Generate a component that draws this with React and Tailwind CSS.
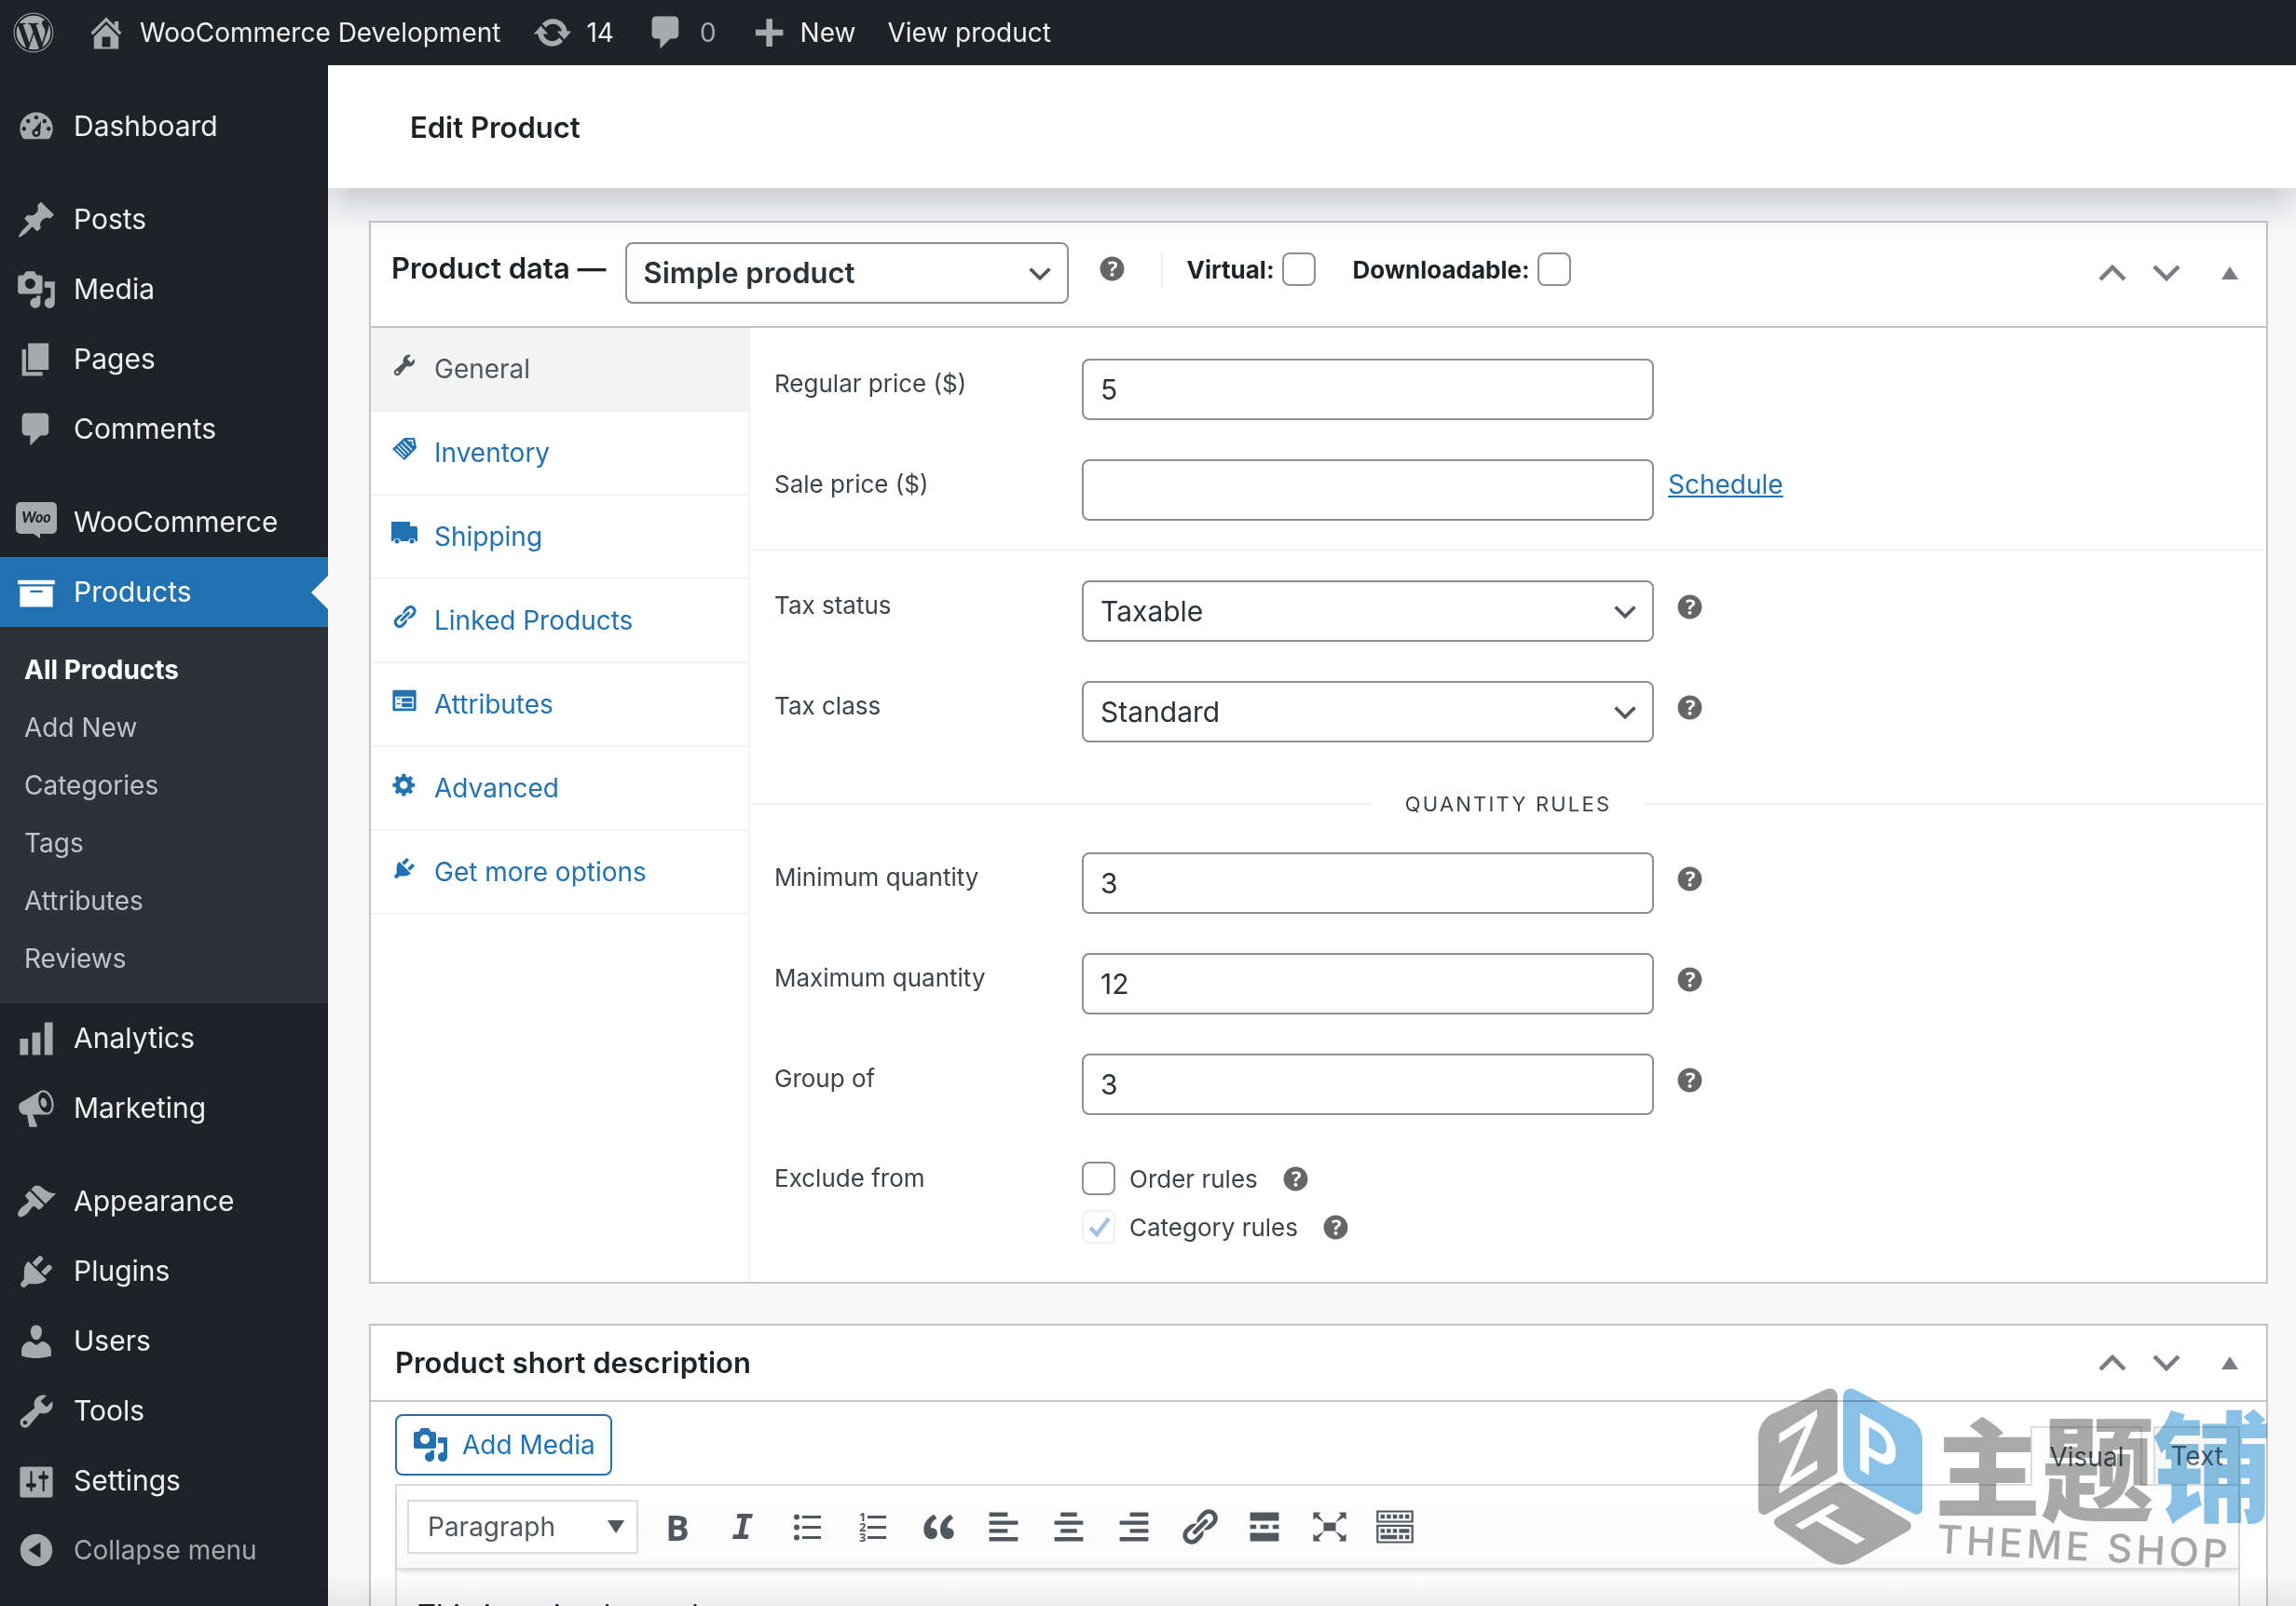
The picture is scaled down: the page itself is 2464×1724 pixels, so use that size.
import React, { useState } from "react";
import { FaWordpress } from "react-icons/fa";

const ICONS = {
  home: "M16 8.5l1.53 1.53-1.06 1.06L10 4.6l-6.47 6.5-1.06-1.07L10 2.5l4 4v-2h2v4zm-6-2.46l6 5.99V18H4v-5.97zM12 17v-5H8v5h4z",
  update:
    "M10.2 3.28c3.53 0 6.43 2.61 6.92 6h2.08l-3.5 4-3.5-4h2.32c-.45-1.97-2.21-3.45-4.32-3.45-1.45 0-2.73.71-3.54 1.78L4.95 5.66C6.23 4.2 8.11 3.28 10.2 3.28zm-.4 13.44c-3.52 0-6.43-2.61-6.92-6H.8l3.5-4c1.17 1.33 2.33 2.67 3.5 4H5.48c.45 1.97 2.21 3.45 4.32 3.45 1.45 0 2.73-.71 3.54-1.78l1.71 1.95c-1.28 1.46-3.15 2.38-5.25 2.38z",
  plus: "M17 8.5v3h-5.2v5.3h-3v-5.3H3.6v-3h5.2V3.3h3v5.2z",
  comments:
    "M5 2h9c1.1 0 2 .9 2 2v7c0 1.1-.9 2-2 2h-2l-5 5v-5H5c-1.1 0-2-.9-2-2V4c0-1.1.9-2 2-2z",
  posts:
    "M10.44 3.02l1.82-1.82 6.36 6.35-1.83 1.82c-1.05-.68-2.48-.57-3.41.36l-.75.75c-.92.93-1.04 2.35-.35 3.41l-1.83 1.82-2.41-2.41-2.8 2.79c-.42.42-3.38 2.71-3.8 2.29s1.86-3.39 2.28-3.81l2.79-2.79L4.1 9.36l1.83-1.82c1.05.69 2.48.57 3.4-.36l.75-.75c.93-.92 1.05-2.35.36-3.41z",
  media:
    "M13 11V4c0-.55-.45-1-1-1h-1.67L9 1H5L3.67 3H2c-.55 0-1 .45-1 1v7c0 .55.45 1 1 1h10c.55 0 1-.45 1-1zM7 4.5c1.38 0 2.5 1.12 2.5 2.5S8.38 9.5 7 9.5 4.5 8.38 4.5 7 5.62 4.5 7 4.5zM14 6h5v10.5c0 1.38-1.12 2.5-2.5 2.5S14 17.88 14 16.5s1.12-2.5 2.5-2.5c.17 0 .34.02.5.05V9h-3V6zm-4 8.05V13h2v3.5c0 1.38-1.12 2.5-2.5 2.5S7 17.88 7 16.5 8.12 14 9.5 14c.17 0 .34.02.5.05z",
  pages: "M6 15V2h10v13H6zm-1 1h8v2H3V5h2v11z",
  products: "M19 4v2H1V4h18zM2 7h16v10H2V7zm11 3V9H7v1h6z",
  analytics: "M18 18V2h-4v16h4zm-6 0V7H8v11h4zm-6 0v-8H2v8h4z",
  marketing:
    "M18.15 5.94c.46 1.62.38 3.22-.02 4.48-.42 1.28-1.26 2.18-2.3 2.48-.16.06-.26.06-.4.06-.06.02-.12.02-.18.02-.06.02-.14.02-.22.02h-6.8l2.22 5.5c.02.14-.06.26-.14.34-.08.1-.24.16-.34.16H6.95c-.1 0-.26-.06-.34-.16-.08-.08-.16-.2-.14-.34l-1-5.5H4.25l-.02-.02c-.5.06-1.08-.18-1.54-.62s-.88-1.08-1.06-1.88c-.24-.8-.2-1.56-.02-2.2.18-.62.58-1.08 1.06-1.3l.02-.02 9-5.4c.1-.06.18-.1.24-.16.06-.04.14-.08.24-.12.16-.08.28-.12.5-.18 1.04-.3 2.24.1 3.22.98s1.84 2.24 2.26 3.86zm-2.58 5.98h-.02c.4-.1.74-.34 1.04-.7.58-.7.86-1.76.86-3.04 0-.64-.1-1.3-.28-1.98-.34-1.36-1.02-2.5-1.78-3.24s-1.68-1.1-2.46-.88c-.82.22-1.4.96-1.7 2-.32 1.04-.28 2.36.06 3.72.38 1.36 1 2.5 1.8 3.24.78.74 1.62 1.1 2.48.88zm-2.54-7.08c.22-.04.42-.02.62.04.38.16.76.48 1.02 1s.42 1.2.42 1.78c0 .3-.04.56-.12.8-.18.48-.44.84-.86.94-.34.1-.8-.06-1.14-.4s-.64-.86-.78-1.5c-.18-.62-.12-1.24.02-1.72s.48-.84.82-.94z",
  appearance:
    "M14.48 11.06L7.41 3.99l1.5-1.5c.5-.56 2.3-.47 3.51.32 1.21.8 1.43 1.28 2.91 2.1 1.18.64 2.45 1.26 4.45.85zm-.71.71L6.7 4.7 4.93 6.47c-.39.39-.39 1.02 0 1.41l1.06 1.06c.39.39.39 1.03 0 1.42-.6.6-1.43 1.11-2.21 1.69-.35.26-.7.53-1.01.84C1.43 14.23.4 16.08 1.4 17.07c.99 1 2.84-.03 4.18-1.36.31-.31.58-.66.85-1.02.57-.78 1.08-1.61 1.69-2.21.39-.39 1.02-.39 1.41 0l1.06 1.06c.39.39 1.02.39 1.41 0z",
  plugins:
    "M13.11 4.36L9.87 7.6 8 5.73l3.24-3.24c.35-.34 1.05-.2 1.56.32.52.51.66 1.21.31 1.55zm-8 1.77l.91-1.12 9.01 9.01-1.19.84c-.71.71-2.63 1.16-3.82 1.16H6.14L4.9 17.26c-.59.59-1.54.59-2.12 0-.59-.58-.59-1.53 0-2.12l1.24-1.24v-3.88c0-1.13.4-3.19 1.09-3.89zm7.26 3.97l3.24-3.24c.34-.35 1.04-.21 1.55.31.52.51.66 1.21.31 1.55l-3.24 3.25z",
  users:
    "M10 9.25c-2.27 0-2.73-3.44-2.73-3.44C7 4.02 7.82 2 9.97 2c2.16 0 2.98 2.02 2.71 3.81 0 0-.41 3.44-2.68 3.44zm0 2.57L12.72 10c2.39 0 4.52 2.33 4.52 4.53v2.49s-3.65 1.13-7.24 1.13c-3.65 0-7.24-1.13-7.24-1.13v-2.49c0-2.25 1.94-4.48 4.47-4.48z",
  tools:
    "M16.68 9.77c-1.34 1.34-3.3 1.67-4.95.99l-5.41 6.52c-.99.99-2.59.99-3.58 0s-.99-2.59 0-3.57l6.52-5.42c-.68-1.65-.35-3.61.99-4.95 1.28-1.28 3.12-1.62 4.72-1.06l-2.89 2.89 2.82 2.82 2.86-2.87c.53 1.58.18 3.39-1.08 4.65zM3.81 16.21c.4.39 1.04.39 1.43 0 .4-.4.4-1.04 0-1.43-.39-.4-1.03-.4-1.43 0-.39.39-.39 1.03 0 1.43z",
  settings:
    "M18 16V4c0-.55-.45-1-1-1H3c-.55 0-1 .45-1 1v13c0 .55.45 1 1 1h14c.55 0 1-.45 1-1zM8 11h1c.55 0 1 .45 1 1s-.45 1-1 1H8v1.5c0 .28-.22.5-.5.5s-.5-.22-.5-.5V13H6c-.55 0-1-.45-1-1s.45-1 1-1h1V5.5c0-.28.22-.5.5-.5s.5.22.5.5V11zm5-2h-1c-.55 0-1-.45-1-1s.45-1 1-1h1v-1.5c0-.28.22-.5.5-.5s.5.22.5.5V7h1c.55 0 1 .45 1 1s-.45 1-1 1h-1v5.5c0 .28-.22.5-.5.5s-.5-.22-.5-.5V9z",
  collapse:
    "M10 2.16c4.33 0 7.84 3.51 7.84 7.84s-3.51 7.84-7.84 7.84S2.16 14.33 2.16 10 5.67 2.16 10 2.16zm2 11.72V6.12L6.18 9.97z",
  help: "M17 10c0-3.87-3.14-7-7-7-3.87 0-7 3.13-7 7s3.13 7 7 7c3.86 0 7-3.13 7-7zm-6.3 1.48H9.14v-.43c0-.38.08-.7.24-.98s.46-.57.88-.89c.41-.29.68-.53.81-.71.14-.18.2-.39.2-.62 0-.25-.09-.44-.28-.58-.19-.13-.45-.19-.79-.19-.58 0-1.25.19-2 .57l-.64-1.28c.87-.49 1.8-.74 2.77-.74.81 0 1.45.2 1.92.58.48.39.71.91.71 1.55 0 .43-.09.8-.29 1.11-.19.32-.57.67-1.11 1.06-.38.28-.61.49-.71.63-.1.15-.15.34-.15.57v.35zm-1.47 2.74c-.18-.17-.27-.42-.27-.73 0-.33.08-.58.26-.75s.43-.25.77-.25c.32 0 .57.09.75.26s.27.42.27.74c0 .3-.09.55-.27.72-.18.18-.43.27-.75.27-.33 0-.58-.09-.76-.26z",
  link: "M17.74 2.76c1.68 1.69 1.68 4.41 0 6.1l-1.53 1.52c-1.12 1.12-2.7 1.47-4.14 1.09l2.62-2.61.76-.77.76-.76c.84-.84.84-2.2 0-3.04-.84-.85-2.2-.85-3.04 0l-.77.76-3.38 3.38c-.37-1.44-.02-3.02 1.1-4.14l1.52-1.53c1.69-1.68 4.42-1.68 6.1 0zM8.59 13.43l5.34-5.34c.42-.42.42-1.1 0-1.52-.44-.43-1.13-.39-1.53 0l-5.33 5.34c-.42.42-.42 1.1 0 1.52.44.43 1.13.39 1.52 0zm-.76 2.29l4.14-4.15c.38 1.44.03 3.02-1.09 4.14l-1.52 1.53c-1.69 1.68-4.41 1.68-6.1 0-1.68-1.68-1.68-4.42 0-6.1l1.53-1.52c1.12-1.12 2.7-1.47 4.14-1.1l-4.14 4.15c-.85.84-.85 2.2 0 3.05.84.84 2.2.84 3.04 0z",
  attributes:
    "M2 2h16c.55 0 1 .45 1 1v14c0 .55-.45 1-1 1H2c-.55 0-1-.45-1-1V3c0-.55.45-1 1-1zm15 14V7H3v9h14zM4 8v1h3V8H4zm4 0v3h8V8H8zm-4 4v1h3v-1H4zm4 0v3h8v-3H8z",
  gear: "M18 12h-2.18c-.17.7-.44 1.35-.81 1.93l1.54 1.54-2.1 2.1-1.54-1.54c-.58.36-1.23.63-1.91.79V19H8v-2.18c-.68-.16-1.33-.43-1.91-.79l-1.54 1.54-2.12-2.12 1.54-1.54c-.36-.58-.63-1.23-.79-1.91H1V9.03h2.17c.16-.7.44-1.35.8-1.94L2.43 5.55l2.1-2.1 1.54 1.54c.58-.37 1.24-.64 1.93-.81V2h3v2.18c.68.16 1.33.43 1.91.79l1.54-1.54 2.12 2.12-1.54 1.54c.36.59.64 1.24.8 1.94H18V12zm-8.5 1.5c1.66 0 3-1.34 3-3s-1.34-3-3-3-3 1.34-3 3 1.34 3 3 3z",
  quote:
    "M9.49 13.22c0-.74-.2-1.38-.61-1.9-.62-.78-1.83-.88-2.53-.72-.29-1.65 1.11-3.75 2.92-4.65L7.88 4c-2.73 1.3-5.42 4.28-4.96 8.05C3.21 14.43 4.59 16 6.54 16c.85 0 1.56-.25 2.12-.75s.83-1.18.83-2.03zm8.05 0c0-.74-.2-1.38-.61-1.9-.63-.78-1.83-.88-2.53-.72-.29-1.65 1.11-3.75 2.92-4.65L15.93 4c-2.73 1.3-5.41 4.28-4.95 8.05.29 2.38 1.66 3.95 3.61 3.95.85 0 1.56-.25 2.12-.75s.83-1.18.83-2.03z",
  alignLeft: "M12 5V3H3v2h9zm5 4V7H3v2h14zm-5 4v-2H3v2h9zm5 4v-2H3v2h14z",
  alignCenter: "M14 5V3H6v2h8zm3 4V7H3v2h14zm-3 4v-2H6v2h8zm3 4v-2H3v2h14z",
  alignRight: "M17 5V3H8v2h9zm0 4V7H3v2h14zm0 4v-2H8v2h9zm0 4v-2H3v2h14z",
  more: "M17 7V3H3v4h14zM6 11V9H3v2h3zm6 0V9H8v2h4zm5 0V9h-3v2h3zm0 6v-4H3v4h14z",
  fullscreen:
    "M7 8h6v4H7zM2 3h3.600L4.500 4.200 7.300 8 3.300 5.400 2 6.600zM18 3h-3.600l1.100 1.200L12.700 8l4-2.600L18 6.600zM2 17h3.600l-1.100-1.200L7.300 12l-4 2.600L2 13.400zM18 17h-3.600l1.100-1.200L12.700 12l4 2.600 1.300-1.200z",
  kitchen:
    "M19 2v6H1V2h18zm-1 5V3H2v4h16zM5 4v2H3V4h2zm3 0v2H6V4h2zm3 0v2H9V4h2zm3 0v2h-2V4h2zm3 0v2h-2V4h2zm2 5v9H1V9h18zm-1 8v-7H2v7h16zM5 11v2H3v-2h2zm3 0v2H6v-2h2zm3 0v2H9v-2h2zm6 0v2h-5v-2h5zm-6 3v2H3v-2h8zm3 0v2h-2v-2h2zm3 0v2h-2v-2h2z",
};

function Icon({ name, className }) {
  return (
    <svg viewBox="0 0 20 20" fill="currentColor" fillRule="evenodd" className={className} aria-hidden="true">
      <path d={ICONS[name]} />
    </svg>
  );
}

function DashboardIcon() {
  return (
    <svg viewBox="0 1 20 20" className="size-11 shrink-0" aria-hidden="true">
      <path fill="currentColor" d="M3.8 17h12.400A8 8 0 1 0 3.800 17z" />
      <g fill="#1d2327">
        <circle cx="10" cy="6.500" r="1" />
        <circle cx="6" cy="8.300" r="1" />
        <circle cx="14" cy="8.300" r="1" />
        <circle cx="4" cy="12" r="1" />
        <circle cx="16" cy="12" r="1" />
        <path d="M12.300 8.300l-.4 5.400a2 2 0 1 1-2.800-1.600z" />
      </g>
      <circle cx="10" cy="14" r=".9" fill="currentColor" />
    </svg>
  );
}

function WooIcon() {
  return (
    <svg viewBox="0 0 44 44" className="size-11 shrink-0" aria-hidden="true">
      <path
        fill="currentColor"
        d="M5 0h34a5 5 0 0 1 5 5v24a5 5 0 0 1-5 5H26v5l-7-5H5a5 5 0 0 1-5-5V5a5 5 0 0 1 5-5z"
      />
      <text x="22" y="22" textAnchor="middle" fontSize="16" fontWeight="900" fontStyle="italic" fill="#1d2327" fontFamily="Lato, sans-serif">
        Woo
      </text>
    </svg>
  );
}

function InventoryIcon() {
  return (
    <svg viewBox="0 0 28 28" className="size-7 shrink-0" aria-hidden="true">
      <path d="M1 14 14 2l11 0 2 11-13 13z" fill="currentColor" />
      <path d="M17 4h6l1 7z" fill="#fff" />
      <circle cx="21" cy="7" r="1.600" fill="currentColor" />
      <path d="M13 6l9 9M10 9l9 9M7 11l9 9M5 14l9 9" stroke="#fff" strokeWidth="1.200" />
    </svg>
  );
}

function ShippingIcon() {
  return (
    <svg viewBox="0 0 28 28" className="size-7 shrink-0" aria-hidden="true">
      <path d="M0 2h20v5h7l1 2v14H0z" fill="currentColor" />
      <path d="M2 24a4 4 0 0 1 8 0M18 24a4 4 0 0 1 8 0" fill="#fff" />
      <circle cx="6" cy="23" r="2.500" fill="currentColor" />
      <circle cx="22" cy="23" r="2.500" fill="currentColor" />
    </svg>
  );
}

function ListIcon({ numbered }) {
  return (
    <svg viewBox="0 0 44 44" className="size-11" fill="currentColor" aria-hidden="true">
      <path d="M16 10h20v3H16zM16 21h20v3H16zM16 32h20v3H16z" />
      {numbered ? (
        <g fontSize="13" fontWeight="700" fontFamily="Open Sans, sans-serif">
          <text x="7" y="16">1</text>
          <text x="7" y="27">2</text>
          <text x="7" y="38">3</text>
        </g>
      ) : (
        <g>
          <circle cx="10" cy="11.500" r="3" />
          <circle cx="10" cy="22.500" r="3" />
          <circle cx="10" cy="33.500" r="3" />
        </g>
      )}
    </svg>
  );
}

function Chevron({ up, className }) {
  return (
    <svg viewBox="0 0 32 20" fill="none" stroke="currentColor" className={className} aria-hidden="true">
      <path d={up ? "M3 17 16 4l13 13" : "M3 3l13 13L29 3"} strokeWidth="4.500" />
    </svg>
  );
}

const MENU = [
  [{ label: "Dashboard", icon: "dashboard" }],
  [
    { label: "Posts", icon: "posts" },
    { label: "Media", icon: "media" },
    { label: "Pages", icon: "pages" },
    { label: "Comments", icon: "comments" },
  ],
  [
    { label: "WooCommerce", icon: "woo" },
    { label: "Products", icon: "products", active: true },
    { label: "Analytics", icon: "analytics" },
    { label: "Marketing", icon: "marketing" },
  ],
  [
    { label: "Appearance", icon: "appearance" },
    { label: "Plugins", icon: "plugins" },
    { label: "Users", icon: "users" },
    { label: "Tools", icon: "tools" },
    { label: "Settings", icon: "settings" },
  ],
];

const SUBMENU = ["All Products", "Add New", "Categories", "Tags", "Attributes", "Reviews"];

const TABS = [
  { label: "General", icon: "tools" },
  { label: "Inventory", icon: "inventory" },
  { label: "Shipping", icon: "shipping" },
  { label: "Linked Products", icon: "link" },
  { label: "Attributes", icon: "attributes" },
  { label: "Advanced", icon: "gear" },
  { label: "Get more options", icon: "plugins" },
];

function AdminBar() {
  return (
    <header className="flex h-[70px] shrink-0 items-center gap-[34px] bg-[#1d2327] pl-3.5 text-[28px] text-[#f0f0f1]">
      <a href="#wp" aria-label="About WordPress" className="text-[#a7aaad]">
        <FaWordpress className="size-11" />
      </a>
      <a href="#site" className="flex items-center gap-3.5">
        <Icon name="home" className="size-11 text-[#a7aaad]" />
        WooCommerce Development
      </a>
      <a href="#updates" className="flex items-center gap-3.5">
        <Icon name="update" className="size-11 text-[#a7aaad]" />
        14
      </a>
      <a href="#comments" className="flex items-center gap-3.5 text-[#a7aaad]">
        <Icon name="comments" className="size-11" />0
      </a>
      <a href="#new" className="flex items-center gap-3">
        <Icon name="plus" className="size-11 text-[#a7aaad]" />
        New
      </a>
      <a href="#view">View product</a>
    </header>
  );
}

function MenuIcon({ icon }) {
  if (icon === "dashboard") return <DashboardIcon />;
  if (icon === "woo") return <WooIcon />;
  return <Icon name={icon} className="size-11 shrink-0" />;
}

function Sidebar() {
  return (
    <nav className="w-[352px] shrink-0 bg-[#1d2327] pt-7 text-[30px] text-[#f0f0f1]">
      <ul className="flex flex-col gap-[25px]">
        {MENU.map((group, index) => (
          <li key={index}>
            <ul>
              {group.map((item) => (
                <li key={item.label}>
                  <a
                    href={`#${item.label}`}
                    className={`relative flex h-[75px] items-center gap-[18px] pl-[17px] ${
                      item.active ? "bg-[#2271b1] text-white" : ""
                    }`}
                  >
                    <span className={item.active ? "text-white" : "text-[#a7aaad]"}>
                      <MenuIcon icon={item.icon} />
                    </span>
                    {item.label}
                    {item.active && (
                      <span className="absolute top-1/2 right-0 -translate-y-1/2 border-y-[18px] border-r-[18px] border-y-transparent border-r-[#f8f8f9]" />
                    )}
                  </a>
                  {item.active && (
                    <ul className="bg-[#2c3338] pt-[15px] pb-[17px] text-[28px] text-[#c3c4c7]">
                      {SUBMENU.map((label, i) => (
                        <li key={label}>
                          <a
                            href={`#${label}`}
                            className={`block pl-[26px] leading-[62px] ${i === 0 ? "font-bold text-white" : ""}`}
                          >
                            {label}
                          </a>
                        </li>
                      ))}
                    </ul>
                  )}
                </li>
              ))}
            </ul>
          </li>
        ))}
      </ul>
      <button className="flex h-[73px] w-full items-center gap-[18px] pl-[17px] text-[28px] text-[#a7aaad]">
        <Icon name="collapse" className="size-11" />
        Collapse menu
      </button>
    </nav>
  );
}

function Help({ label }) {
  return (
    <button aria-label={`Help: ${label}`} className="flex h-14 items-center text-[#666]">
      <Icon name="help" className="size-[37px]" />
    </button>
  );
}

function PanelHandles() {
  return (
    <div className="flex h-[66px] items-center text-[#787c82]">
      <button aria-label="Move up" className="px-[13px]">
        <Chevron up className="h-5 w-8" />
      </button>
      <button aria-label="Move down" className="px-[13px]">
        <Chevron className="h-5 w-8" />
      </button>
      <button aria-label="Toggle panel" className="px-[30px]">
        <svg viewBox="0 0 18 14" fill="currentColor" className="h-3.5 w-[18px]" aria-hidden="true">
          <path d="M9 0l9 14H0z" />
        </svg>
      </button>
    </div>
  );
}

function SelectBox({ id, options, className, label }) {
  return (
    <div className={`relative ${className}`}>
      <select
        id={id}
        aria-label={label}
        className="h-[66px] w-full appearance-none rounded-lg border-2 border-[#8c8f94] bg-white pl-[18px] text-[#2c3338]"
      >
        {options.map((option) => (
          <option key={option}>{option}</option>
        ))}
      </select>
      <Chevron className="pointer-events-none absolute top-[26px] right-[18px] h-4 w-[26px] text-[#50575e]" />
    </div>
  );
}

function Field({ id, label, children }) {
  return (
    <div className="flex items-start pl-[26px]">
      <label htmlFor={id} className="w-[330px] shrink-0 text-[26px] leading-[54px] text-[#3c434a]">
        {label}
      </label>
      {children}
    </div>
  );
}

function TextField({ id, label, value, children }) {
  const [text, setText] = useState(value);
  return (
    <Field id={id} label={label}>
      <input
        id={id}
        type="text"
        value={text}
        onChange={(e) => setText(e.target.value)}
        className="h-[66px] w-[614px] rounded-lg border-2 border-[#8c8f94] bg-white px-[18px] text-[30px] text-[#2c3338]"
      />
      {children}
    </Field>
  );
}

function Tick({ id, checked, disabled }) {
  return (
    <span className="relative inline-flex shrink-0">
      <input
        id={id}
        type="checkbox"
        defaultChecked={checked}
        disabled={disabled}
        className="size-9 appearance-none rounded-lg border-2 border-[#8c8f94] bg-white disabled:border-[#f0f0f1]"
      />
      {checked && (
        <svg viewBox="0 0 36 36" className="pointer-events-none absolute inset-0" fill="none" stroke="#a9c0e0" aria-hidden="true">
          <path d="M9 19l7 7L29 9" strokeWidth="4.500" />
        </svg>
      )}
    </span>
  );
}

function TabIcon({ icon }) {
  if (icon === "inventory") return <InventoryIcon />;
  if (icon === "shipping") return <ShippingIcon />;
  return <Icon name={icon} className="size-7 shrink-0" />;
}

function ProductData() {
  const [tab, setTab] = useState("General");

  return (
    <section className="border-2 border-[#c3c4c7] bg-white">
      <div className="flex items-start border-b-2 border-[#c3c4c7] pt-[21px] pb-6 pl-[22px]">
        <h2 className="mr-5 text-[31px] leading-14 font-semibold text-[#1d2327]">Product data —</h2>
        <SelectBox
          label="Product type"
          options={["Simple product", "Grouped product", "Variable product"]}
          className="w-[476px] text-[31px] font-semibold"
        />
        <div className="ml-7">
          <Help label="Product type" />
        </div>
        <div className="mt-3 ml-[34px] h-9 w-0.5 bg-[#eee]" />
        <div className="ml-[26px] flex h-[58px] items-center gap-10 text-[26px] font-bold text-[#1d2327]">
          <span className="flex items-center gap-2">
            <label htmlFor="virtual">Virtual:</label>
            <Tick id="virtual" />
          </span>
          <span className="flex items-center gap-2">
            <label htmlFor="downloadable">Downloadable:</label>
            <Tick id="downloadable" />
          </span>
        </div>
        <div className="ml-auto">
          <PanelHandles />
        </div>
      </div>

      <div className="flex">
        <div className="w-[407px] shrink-0 border-r-2 border-[#f3f3f4] text-[28px]">
          {TABS.map((item) => (
            <button
              key={item.label}
              onClick={() => setTab(item.label)}
              className={`flex h-[90px] w-full items-center gap-[18px] border-b-2 border-[#f3f3f4] pl-[22px] ${
                tab === item.label ? "bg-[#f4f4f4] text-[#50575e]" : "text-[#2271b1]"
              }`}
            >
              <span className="pb-2">
                <TabIcon icon={item.icon} />
              </span>
              {item.label}
            </button>
          ))}
        </div>

        <div className="flex-1">
          <div className="flex flex-col gap-[42px] border-b-2 border-[#f3f3f4] pt-[33px] pb-[30px]">
            <TextField id="regular_price" label="Regular price ($)" value="5" />
            <TextField id="sale_price" label="Sale price ($)" value="">
              <a href="#schedule" className="ml-[15px] text-[28px] leading-[54px] text-[#2271b1] underline">
                Schedule
              </a>
            </TextField>
          </div>

          <div className="flex flex-col gap-[42px] pt-8">
            <Field id="tax_status" label="Tax status">
              <SelectBox id="tax_status" options={["Taxable", "Shipping only", "None"]} className="mr-5 w-[614px] text-[30px]" />
              <Help label="Tax status" />
            </Field>
            <Field id="tax_class" label="Tax class">
              <SelectBox id="tax_class" options={["Standard", "Reduced rate", "Zero rate"]} className="mr-5 w-[614px] text-[30px]" />
              <Help label="Tax class" />
            </Field>
          </div>

          <div className="mt-[50px] mb-9 flex items-center gap-9">
            <div className="h-0.5 flex-1 bg-[#f3f3f4]" />
            <h3 className="text-[22px] leading-8 tracking-widest text-[#3c434a]">QUANTITY RULES</h3>
            <div className="h-0.5 flex-1 bg-[#f3f3f4]" />
          </div>

          <div className="flex flex-col gap-[42px]">
            <TextField id="min_qty" label="Minimum quantity" value="3">
              <div className="ml-5">
                <Help label="Minimum quantity" />
              </div>
            </TextField>
            <TextField id="max_qty" label="Maximum quantity" value="12">
              <div className="ml-5">
                <Help label="Maximum quantity" />
              </div>
            </TextField>
            <TextField id="group_of" label="Group of" value="3">
              <div className="ml-5">
                <Help label="Group of" />
              </div>
            </TextField>
          </div>

          <fieldset className="mt-10 flex pb-[31px] pl-[26px] text-[26px] text-[#3c434a]">
            <legend className="float-left w-[330px] leading-14">Exclude from</legend>
            <div>
              <div className="flex h-14 items-center">
                <Tick id="order_rules" />
                <label htmlFor="order_rules" className="mr-[22px] ml-[15px]">
                  Order rules
                </label>
                <Help label="Order rules" />
              </div>
              <div className="-mt-1 flex h-14 items-center">
                <Tick id="category_rules" checked disabled />
                <label htmlFor="category_rules" className="mr-[22px] ml-[15px]">
                  Category rules
                </label>
                <Help label="Category rules" />
              </div>
            </div>
          </fieldset>
        </div>
      </div>
    </section>
  );
}

const TOOLS = [
  { label: "Bold", text: "B", style: "font-['Open_Sans'] text-[38px] font-bold" },
  { label: "Italic", text: "I", style: "font-['DejaVu_Sans_Mono'] text-[38px] font-bold italic" },
  { label: "Bulleted list", list: true },
  { label: "Numbered list", list: true, numbered: true },
  { label: "Blockquote", icon: "quote" },
  { label: "Align left", icon: "alignLeft" },
  { label: "Align center", icon: "alignCenter" },
  { label: "Align right", icon: "alignRight" },
  { label: "Insert link", icon: "link" },
  { label: "Read more", icon: "more" },
  { label: "Fullscreen", icon: "fullscreen" },
  { label: "Toolbar toggle", icon: "kitchen" },
];

function ShortDescription() {
  return (
    <section className="relative mt-[43px] border-2 border-[#c3c4c7] bg-white">
      <div className="flex h-[82px] items-center justify-between border-b-2 border-[#c3c4c7] pl-[26px]">
        <h2 className="text-[31px] font-semibold text-[#1d2327]">Product short description</h2>
        <PanelHandles />
      </div>

      <div className="pr-7 pl-[26px]">
        <div className="flex items-end justify-between">
          <button className="mt-[13px] mb-[9px] flex h-[66px] items-center gap-3.5 rounded-lg border-2 border-[#2271b1] px-4 text-[28px] text-[#2271b1]">
            <Icon name="media" className="size-10" />
            Add Media
          </button>
          <div className="-mb-0.5 flex gap-3 text-[28px]">
            <button className="h-16 border-2 border-b-0 border-[#dcdcde] bg-white px-[18px] text-[#50575e]">Visual</button>
            <button className="h-16 border-2 border-[#dcdcde] bg-[#f6f7f7] px-4 text-[#646970]">Text</button>
          </div>
        </div>

        <div className="border-2 border-[#dcdcde]">
          <div className="flex h-[90px] items-center border-b-2 border-[#dcdcde] bg-gradient-to-b from-white to-[#fafafa] pl-[11px] text-[#50575e] shadow-md">
            <button className="mr-[7px] flex h-[58px] w-[248px] items-center justify-between border-2 border-[#dcdcde] bg-white pr-[13px] pl-5 text-[28px]">
              Paragraph
              <svg viewBox="0 0 18 14" fill="currentColor" className="h-3.5 w-[18px]" aria-hidden="true">
                <path d="M0 0h18l-9 14z" />
              </svg>
            </button>
            {TOOLS.map((tool) => (
              <button key={tool.label} aria-label={tool.label} className="flex w-[70px] items-center justify-center">
                {tool.text && <span className={`leading-11 ${tool.style}`}>{tool.text}</span>}
                {tool.list && <ListIcon numbered={tool.numbered} />}
                {tool.icon && <Icon name={tool.icon} className="size-11" />}
              </button>
            ))}
          </div>
          <p className="h-60 px-[22px] pt-[26px] text-[31px] text-[#1d2327]">This is a simple product.</p>
        </div>
      </div>

      <ThemeShopLogo />
    </section>
  );
}

function ThemeShopLogo() {
  return (
    <svg viewBox="0 0 560 216" className="pointer-events-none absolute top-[60px] -right-1.5 h-[216px] w-[560px] mix-blend-multiply">
      <g fill="#a9a9a9" stroke="#a9a9a9" strokeWidth="12" strokeLinejoin="round">
        <path d="M84 14c3-1 4 0 4 3v78l-73 42V60c0-8 3-14 10-19z" />
        <path d="M97 114l70 41-58 33c-8 4-14 4-22 0l-55-37z" />
      </g>
      <path
        d="M110 14c-3-1-4 0-4 3v72c0 6 2 10 7 13l66 35V64c0-10-3-15-10-19z"
        fill="#89c2e6"
        stroke="#89c2e6"
        strokeWidth="12"
        strokeLinejoin="round"
      />
      <g fill="#fff" fontFamily="Inter, sans-serif" fontWeight="600">
        <text transform="matrix(.86 -.55 0 1 27 123)" fontSize="88">Z</text>
        <text transform="matrix(.86 .5 0 1 113 92)" fontSize="84">P</text>
        <text transform="matrix(.87 -.5 .87 .5 96 185)" fontSize="80">T</text>
      </g>
      <g fontFamily="'Noto Sans CJK SC', sans-serif" fontWeight="900">
        <text x="198" y="136" fontSize="114" fill="#a9a9a9">主</text>
        <text x="312" y="140" fontSize="122" fill="#a9a9a9">题</text>
        <text x="432" y="141" fontSize="128" fill="#89c2e6">铺</text>
      </g>
      <text
        transform="rotate(3 200 184)"
        x="200"
        y="184"
        fontSize="42"
        fontWeight="500"
        letterSpacing="4"
        fontFamily="Inter, sans-serif"
        fill="#a9a9a9"
      >
        THEME SHOP
      </text>
    </svg>
  );
}

export default function App() {
  return (
    <div className="relative flex h-screen flex-col overflow-hidden bg-[#f8f8f9] font-[Inter,'Noto_Sans_CJK_SC',sans-serif]">
      <AdminBar />
      <div className="flex min-h-0 flex-1">
        <Sidebar />
        <main className="min-w-0 flex-1 overflow-hidden">
          <div className="relative flex h-[132px] items-center bg-white pt-0.5 pl-[88px] shadow-[0_18px_35px_rgba(85,93,102,0.3)]">
            <h1 className="text-[31px] font-semibold text-[#1d2327]">Edit Product</h1>
          </div>
          <div className="pt-[35px] pr-[30px] pl-11">
            <ProductData />
            <ShortDescription />
          </div>
        </main>
      </div>
      <div className="pointer-events-none absolute inset-x-0 bottom-0 h-9 bg-gradient-to-b from-transparent to-black/7" />
    </div>
  );
}
